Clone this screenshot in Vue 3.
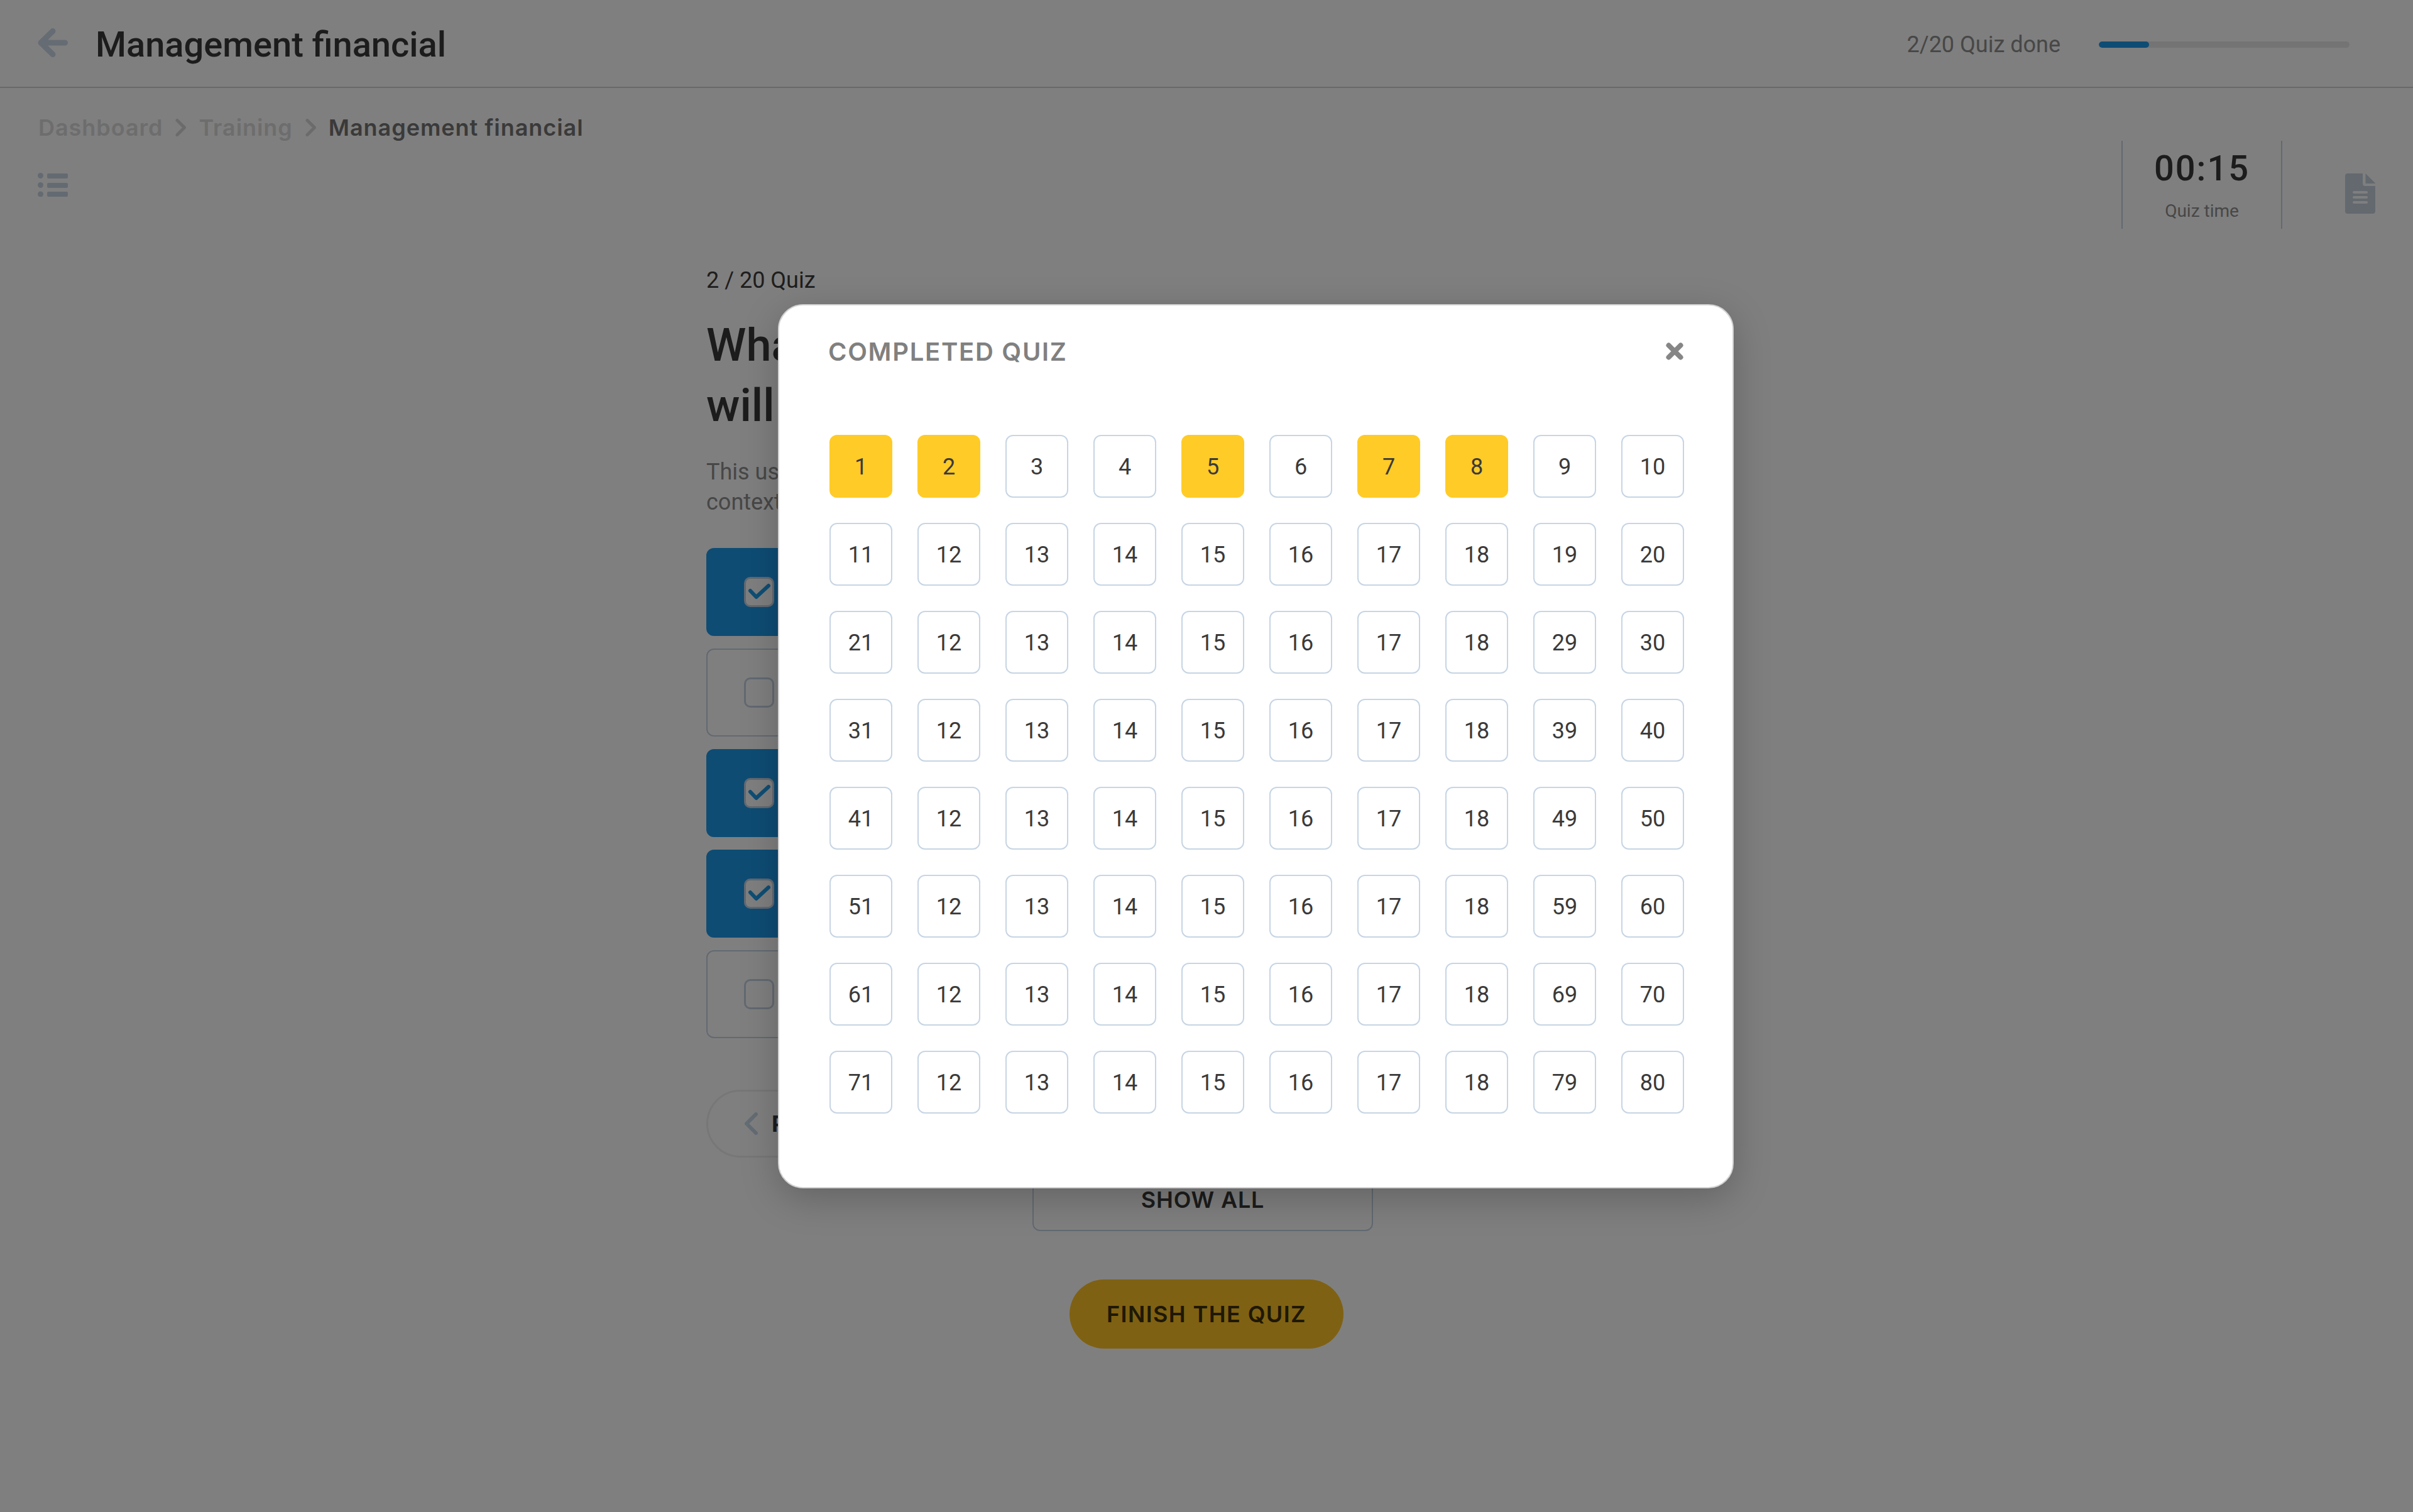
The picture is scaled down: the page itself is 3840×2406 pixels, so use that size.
<script setup>
const options = [true, false, true, true, false]

const done = [1, 2, 5, 7, 8]
const cells = []
for (let row = 0; row < 8; row++) {
  for (let col = 1; col <= 10; col++) {
    // the numbers repeat 12-18 in every row after the second
    const keepTens = row < 2 || col === 1 || col > 8
    cells.push(keepTens ? row * 10 + col : 10 + col)
  }
}
</script>

<template>
  <div class="page">
    <header class="topbar">
      <svg class="back" viewBox="0 0 48 46" width="48" height="46">
        <path d="M43.500 23H6M24 4.500 5 23l19 18.500" fill="none" stroke="currentColor" stroke-width="9" stroke-linecap="round" stroke-linejoin="round" />
      </svg>
      <h1 class="topbar-title">Management financial</h1>
      <span class="progress-label">2/20 Quiz done</span>
      <div class="progress"><div class="progress-fill" :style="{ width: '20%' }"></div></div>
    </header>

    <nav class="crumbs">
      <span class="crumb">Dashboard</span>
      <svg class="crumb-sep" viewBox="0 0 18 28" width="18" height="28"><path d="M3 2.500l11.500 11.500L3 25.500" fill="none" stroke="currentColor" stroke-width="5" stroke-linecap="round" stroke-linejoin="round" /></svg>
      <span class="crumb">Training</span>
      <svg class="crumb-sep" viewBox="0 0 18 28" width="18" height="28"><path d="M3 2.500l11.500 11.500L3 25.500" fill="none" stroke="currentColor" stroke-width="5" stroke-linecap="round" stroke-linejoin="round" /></svg>
      <span class="crumb current">Management financial</span>
    </nav>

    <div class="toolbar">
      <svg class="list-icon" viewBox="0 0 48 38" width="48" height="38" fill="currentColor">
        <circle cx="4.500" cy="4.500" r="4.500" />
        <rect x="15" y="1" width="33" height="8" rx="2" />
        <circle cx="4.500" cy="19.500" r="4.500" />
        <rect x="15" y="16" width="33" height="8" rx="2" />
        <circle cx="4.500" cy="34" r="4.500" />
        <rect x="15" y="30" width="33" height="8" rx="2" />
      </svg>
      <div class="timer">
        <div class="timer-value">00:15</div>
        <div class="timer-label">Quiz time</div>
      </div>
      <svg class="doc-icon" viewBox="0 0 48 64" width="48" height="64">
        <path d="M4 0h24v16a4 4 0 0 0 4 4h16v40a4 4 0 0 1-4 4H4a4 4 0 0 1-4-4V4a4 4 0 0 1 4-4z" fill="currentColor" />
        <path d="M32.500 0 48 15.500v.500H32.500z" fill="currentColor" />
        <rect x="12" y="28" width="24" height="4" rx="2" fill="#fff" />
        <rect x="12" y="36" width="24" height="4" rx="2" fill="#fff" />
        <rect x="12" y="44" width="24" height="4" rx="2" fill="#fff" />
      </svg>
    </div>

    <main class="quiz">
      <div class="quiz-count">2 / 20 Quiz</div>
      <h2 class="question">What<br />will</h2>
      <p class="hint">This us<br />context</p>

      <div class="options">
        <div v-for="(on, i) in options" :key="i" class="option" :class="{ on }">
          <span class="box">
            <svg v-if="on" class="check" viewBox="0 0 36 26" width="36" height="26">
              <path d="M4 11l9.500 10L33 3" fill="none" stroke="#1f9de8" stroke-width="6" stroke-linecap="round" stroke-linejoin="round" />
            </svg>
          </span>
        </div>
      </div>

      <button class="prev">
        <svg viewBox="0 0 22 36" width="22" height="36"><path d="M19 3 4 18l15 15" fill="none" stroke="currentColor" stroke-width="6" stroke-linecap="round" stroke-linejoin="round" /></svg>
        <span>PREVIOUS</span>
      </button>
      <button class="show-all">SHOW ALL</button>
    </main>

    <div class="finish-row">
      <button class="finish">FINISH THE QUIZ</button>
    </div>

    <div class="overlay">
      <section class="modal">
        <div class="modal-head">
          <h3 class="modal-title">COMPLETED QUIZ</h3>
          <svg class="close" viewBox="0 0 28 28" width="28" height="28">
            <path d="M4.500 4.500l19 19M23.500 4.500l-19 19" fill="none" stroke="currentColor" stroke-width="8" stroke-linecap="round" />
          </svg>
        </div>
        <div class="grid">
          <div v-for="(n, i) in cells" :key="i" class="cell" :class="{ done: i < 10 && done.includes(n) }">{{ n }}</div>
        </div>
      </section>
    </div>
  </div>
</template>

<style>
html,
body {
  margin: 0;
  background: #fff;
}
</style>

<style scoped>
.page {
  position: relative;
  width: 3840px;
  height: 2406px;
  overflow: hidden;
  font-family: Roboto, "Liberation Sans", sans-serif;
  color: #3a3a3a;
}

.topbar {
  display: flex;
  align-items: center;
  box-sizing: border-box;
  height: 140px;
  padding: 0 101px 0 60px;
  border-bottom: 2px solid #c5d3e2;
}

.back {
  color: #ccd9e6;
  margin-top: -2px;
}

.topbar-title {
  flex: 1;
  margin: 4px 0 0 44px;
  font-size: 56px;
  font-weight: 500;
  line-height: 64px;
  color: #383838;
}

.progress-label {
  margin-top: 3px;
  font-size: 36px;
  color: #8e8e8e;
}

.progress {
  width: 399px;
  height: 10px;
  margin-left: 61px;
  margin-top: 3px;
  border-radius: 5px;
  background: #e8e8e8;
  overflow: hidden;
}

.progress-fill {
  height: 100%;
  border-radius: 5px;
  background: #1c98e8;
}

.crumbs {
  display: flex;
  align-items: center;
  height: 42px;
  padding: 42px 0 0 61px;
  font-family: Inter, "Noto Sans", sans-serif;
  font-size: 36px;
  font-weight: 600;
  line-height: 42px;
  letter-spacing: 0.95px;
  color: #dadada;
}

.crumb-sep {
  margin: 0 19px 0 20px;
  color: #d6d6d6;
}

.crumb.current {
  color: #747474;
}

.toolbar {
  display: flex;
  align-items: center;
  height: 140px;
  padding: 0 60px;
}

.list-icon {
  color: #c9d5e3;
  margin-right: auto;
}

.timer {
  box-sizing: border-box;
  width: 256px;
  height: 140px;
  border-left: 2px solid #c5d3e2;
  border-right: 2px solid #c5d3e2;
  text-align: center;
}

.timer-value {
  margin-top: 12px;
  font-size: 56px;
  font-weight: 500;
  line-height: 64px;
  letter-spacing: 2px;
  color: #383838;
}

.timer-label {
  margin-top: 18px;
  font-size: 28px;
  line-height: 36px;
  color: #8e8e8e;
}

.doc-icon {
  margin-left: 100px;
  margin-top: 28px;
  color: #c6d2de;
}

.quiz {
  width: 1580px;
  margin-left: 1124px;
  padding-top: 58px;
}

.quiz-count {
  font-size: 36px;
  line-height: 48px;
  color: #3c3c3c;
}

.question {
  margin: 32px 0 0;
  font-size: 72px;
  font-weight: 500;
  line-height: 96px;
  color: #383838;
}

.hint {
  margin: 33px 0 0;
  font-size: 36px;
  line-height: 48px;
  color: #8e8e8e;
}

.options {
  display: flex;
  flex-direction: column;
  gap: 20px;
  margin-top: 49px;
}

.option {
  display: flex;
  align-items: center;
  box-sizing: border-box;
  height: 140px;
  padding-left: 58px;
  border: 2px solid #c5d3e2;
  border-radius: 12px;
}

.option.on {
  border-color: #1c98e8;
  background: #1c98e8;
}

.box {
  display: flex;
  align-items: center;
  justify-content: center;
  box-sizing: border-box;
  width: 48px;
  height: 48px;
  border: 3px solid #c5d3e2;
  border-radius: 10px;
  background: transparent;
}

.option.on .box {
  background: #fff;
}

.check {
  overflow: visible;
}

.prev {
  display: flex;
  align-items: center;
  gap: 22px;
  box-sizing: border-box;
  width: 340px;
  height: 108px;
  margin-top: 82px;
  padding: 0 0 0 57px;
  border: 3px solid #eeeeee;
  border-radius: 54px;
  background: transparent;
  color: #c9d8e8;
}

.prev span {
  font-family: Inter, "Noto Sans", sans-serif;
  font-size: 36px;
  font-weight: 700;
  color: #383838;
}

.show-all {
  display: block;
  box-sizing: border-box;
  width: 542px;
  height: 100px;
  margin: 17px auto 0;
  border: 2px solid #c5d3e2;
  border-radius: 12px;
  background: transparent;
  font-family: Inter, "Noto Sans", sans-serif;
  font-size: 36px;
  font-weight: 600;
  letter-spacing: 0.8px;
  color: #383838;
}

.finish-row {
  display: flex;
  justify-content: center;
  margin-top: 77px;
}

.finish {
  width: 436px;
  height: 110px;
  border: 0;
  border-radius: 55px;
  background: #ffc327;
  font-family: Inter, "Noto Sans", sans-serif;
  font-size: 36px;
  font-weight: 600;
  letter-spacing: 1.4px;
  color: #3c3006;
}

.overlay {
  position: absolute;
  inset: 0;
  box-sizing: border-box;
  padding: 484px 0 0 1238px;
  background: rgba(0, 0, 0, 0.5);
}

.modal {
  box-sizing: border-box;
  width: 1521px;
  height: 1407px;
  padding: 0 78px 0 80px;
  border: 2px solid #d2d2d2;
  border-radius: 40px;
  background: #fff;
  box-shadow: 0 16px 60px rgba(0, 0, 0, 0.22);
}

.modal-head {
  display: flex;
  align-items: center;
  justify-content: space-between;
  height: 146px;
  margin-bottom: 60px;
}

.modal-title {
  margin: 0 0 0 -2px;
  font-family: Inter, "Noto Sans", sans-serif;
  font-size: 40px;
  font-weight: 600;
  letter-spacing: 1.7px;
  color: #808080;
}

.close {
  color: #868686;
}

.grid {
  display: grid;
  grid-template-columns: repeat(10, 100px);
  grid-auto-rows: 100px;
  gap: 40px;
}

.cell {
  display: flex;
  align-items: center;
  justify-content: center;
  box-sizing: border-box;
  padding-top: 2px;
  border: 2px solid #c7d5e4;
  border-radius: 12px;
  font-size: 36px;
  color: #3a3a3a;
}

.cell.done {
  border-color: #ffcb27;
  background: #ffcb27;
}
</style>
